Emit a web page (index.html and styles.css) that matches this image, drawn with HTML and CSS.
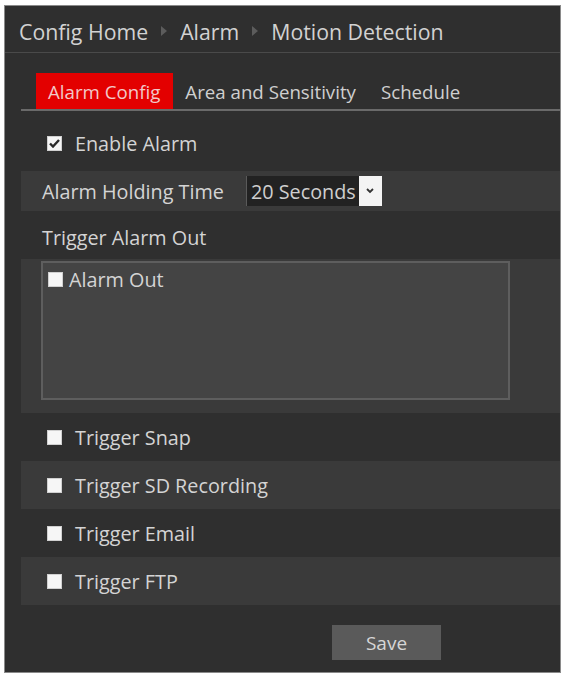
FILE: index.html
```html
<!DOCTYPE html>
<html lang="en">
<head>
  <meta charset="UTF-8">
  <title>Motion Detection</title>
  <link rel="stylesheet" href="styles.css">
</head>
<body>
  <div class="panel">
    <div class="crumbs">
      <span>Config Home</span>
      <svg class="sep" width="6" height="10" viewBox="0 0 6 10"><path d="M0 0 L6 5 L0 10 Z" fill="#5c5c5c"/></svg>
      <span>Alarm</span>
      <svg class="sep" width="6" height="10" viewBox="0 0 6 10"><path d="M0 0 L6 5 L0 10 Z" fill="#5c5c5c"/></svg>
      <span>Motion Detection</span>
    </div>

    <div class="tabs">
      <span class="tab active">Alarm Config</span>
      <span class="tab">Area and Sensitivity</span>
      <span class="tab">Schedule</span>
    </div>

    <div class="form">
      <div class="row enable">
        <span class="cb checked">
          <svg width="11" height="9" viewBox="0 0 11 9"><path d="M1 4.5 L4 7.5 L10 1" fill="none" stroke="#2a2a2a" stroke-width="2.4"/></svg>
        </span>
        <span>Enable Alarm</span>
      </div>

      <div class="row alt holding">
        <span class="label">Alarm Holding Time</span>
        <div class="select">
          <span class="value">20 Seconds</span>
          <span class="arrow">
            <svg width="8" height="6" viewBox="0 0 8 6"><path d="M1 1 L4 4 L7 1" fill="none" stroke="#333" stroke-width="1.8"/></svg>
          </span>
        </div>
      </div>

      <div class="row title">Trigger Alarm Out</div>

      <div class="alt outbox-wrap">
        <div class="outbox">
          <div class="out-item">
            <span class="cb small"></span>
            <span>Alarm Out</span>
          </div>
        </div>
      </div>

      <div class="row trig">
        <span class="cb"></span>
        <span>Trigger Snap</span>
      </div>
      <div class="row trig alt">
        <span class="cb"></span>
        <span>Trigger SD Recording</span>
      </div>
      <div class="row trig">
        <span class="cb"></span>
        <span>Trigger Email</span>
      </div>
      <div class="row trig alt">
        <span class="cb"></span>
        <span>Trigger FTP</span>
      </div>

      <div class="actions">
        <button class="save">Save</button>
      </div>
    </div>
  </div>
</body>
</html>
```

FILE: styles.css
```css
* {
  box-sizing: border-box;
}
body {
  margin: 0;
  background: #ffffff;
  font-family: 'Open Sans', 'Noto Sans', sans-serif;
  color: #d4d4d4;
}
.panel {
  margin: 5px 1px 0 4px;
  width: 557px;
  height: 668px;
  background: #2f2f2f;
  border: 1px solid #8a8a8a;
  overflow: hidden;
}
.crumbs {
  height: 47px;
  display: flex;
  align-items: center;
  gap: 11px;
  padding: 4px 0 0 14px;
  font-size: 21.3px;
  color: #d2d2d2;
  border-bottom: 1px solid #4a4a4a;
}
.crumbs .sep {
  margin: 0 2px;
}
.tabs {
  margin: 20px 0 0 16px;
  display: flex;
  align-items: stretch;
  height: 38px;
  padding-left: 15px;
  border-bottom: 2px solid #6a6a6a;
}
.tab {
  display: flex;
  align-items: center;
  padding: 0 13px 0 12px;
  font-size: 18.7px;
  color: #cfcfcf;
}
.tab.active {
  background: #e30000;
  color: #f2c8c8;
}
.form {
  padding-left: 16px;
}
.row {
  display: flex;
  align-items: center;
  font-size: 19.8px;
  padding-left: 26px;
}
.alt {
  background: #3a3a3a;
}
.enable {
  height: 60px;
  padding-top: 4px;
}
.enable .cb {
  margin-right: 13px;
}
.holding {
  height: 40px;
  padding-left: 21px;
}
.holding .label {
  margin-right: 22px;
}
.select {
  display: flex;
  align-items: stretch;
  height: 30px;
  border-left: 1px solid #5a5a5a;
}
.select .value {
  display: flex;
  align-items: center;
  background: #222222;
  padding: 0 3px 0 4px;
  color: #cfcfcf;
}
.select .arrow {
  width: 23px;
  background: #f4f4f4;
  display: flex;
  align-items: center;
  justify-content: center;
}
.title {
  height: 48px;
  padding-left: 21px;
  padding-top: 4px;
}
.outbox-wrap {
  height: 154px;
  padding: 2px 50px 0 20px;
}
.outbox {
  height: 139px;
  border: 2px solid #5e5e5e;
  background: #444444;
  padding: 3px 5px;
}
.out-item {
  display: flex;
  align-items: center;
  font-size: 19.8px;
  gap: 6px;
}
.cb {
  display: inline-flex;
  align-items: center;
  justify-content: center;
  width: 15px;
  height: 15px;
  background: #f6f6f6;
  border: 1px solid #d0d0d0;
  flex-shrink: 0;
}
.trig {
  height: 48px;
}
.trig .cb {
  margin-right: 13px;
}
.actions {
  display: flex;
  padding: 20px 0 0 311px;
}
.save {
  width: 109px;
  height: 35px;
  background: #5a5a5a;
  border: none;
  color: #d6d6d6;
  font-family: inherit;
  font-size: 19px;
}
```
